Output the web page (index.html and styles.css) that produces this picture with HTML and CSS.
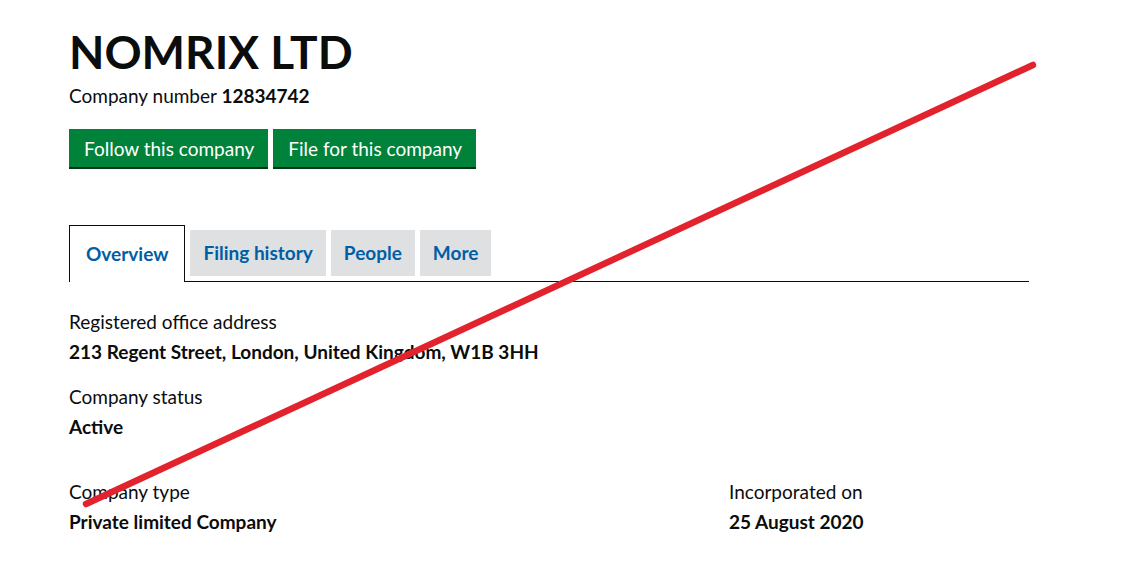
FILE: index.html
```html
<!DOCTYPE html>
<html lang="en">
<head>
<meta charset="utf-8">
<title>NOMRIX LTD</title>
<link rel="stylesheet" href="styles.css">
</head>
<body>
<main class="page">
  <h1 class="heading">NOMRIX LTD</h1>
  <p class="company-number">Company number <strong>12834742</strong></p>
  <div class="actions">
    <a class="button" href="#">Follow this company</a>
    <a class="button" href="#">File for this company</a>
  </div>
  <nav class="tabs">
    <a class="tab active" href="#">Overview</a>
    <a class="tab" href="#">Filing history</a>
    <a class="tab" href="#">People</a>
    <a class="tab" href="#">More</a>
  </nav>
  <dl class="details">
    <div class="item">
      <dt>Registered office address</dt>
      <dd>213 Regent Street, London, United Kingdom, W1B 3HH</dd>
    </div>
    <div class="item">
      <dt>Company status</dt>
      <dd>Active</dd>
    </div>
    <div class="row">
      <div class="item">
        <dt>Company type</dt>
        <dd>Private limited Company</dd>
      </div>
      <div class="item">
        <dt>Incorporated on</dt>
        <dd>25 August 2020</dd>
      </div>
    </div>
  </dl>
  <svg class="strike" width="1128" height="565" viewBox="0 0 1128 565" aria-hidden="true">
    <line x1="86" y1="504" x2="1033" y2="65" stroke="#e2232e" stroke-width="6.5" stroke-linecap="round"/>
  </svg>
</main>
</body>
</html>
```
FILE: styles.css
```css
* { box-sizing: border-box; }
html, body { margin: 0; padding: 0; background: #fff; }
body {
  font-family: "Lato", "Liberation Sans", sans-serif;
  color: #0b0c0c;
}
.page {
  position: relative;
  width: 1128px;
  height: 565px;
  padding: 28px 99px 0 69px;
  overflow: hidden;
}
.heading {
  margin: 0;
  font-size: 46px;
  line-height: 48px;
  font-weight: 700;
  letter-spacing: 0;
}
.company-number {
  margin: 9px 0 0;
  font-size: 19px;
  line-height: 22px;
}
.company-number strong { font-weight: 700; }
.actions {
  display: flex;
  gap: 5px;
  margin-top: 22px;
}
.button {
  display: block;
  background: #00823b;
  color: #fff;
  text-decoration: none;
  font-size: 19px;
  line-height: 36px;
  padding: 2px 14px 0 15px;
  box-shadow: 0 2px 0 #003618;
}
.tabs {
  display: flex;
  align-items: flex-end;
  gap: 5px;
  margin-top: 58px;
  border-bottom: 1px solid #0b0c0c;
  width: 960px;
}
.tab {
  display: block;
  background: #dee0e2;
  color: #005ea5;
  text-decoration: none;
  font-weight: 700;
  font-size: 19px;
  line-height: 46px;
  padding: 0 13px;
  margin-bottom: 5px;
}
.tab.active {
  background: #fff;
  border: 1px solid #0b0c0c;
  border-bottom: 0;
  line-height: 56px;
  padding: 0 16px;
  margin-bottom: -1px;
  height: 57px;
}
.details { margin: 29px 0 0; }
.item dt {
  font-size: 19px;
  line-height: 22px;
}
.item dd {
  margin: 8px 0 0;
  font-size: 19px;
  line-height: 22px;
  font-weight: 700;
}
.item + .item { margin-top: 23px; }
.row {
  display: grid;
  grid-template-columns: 660px 1fr;
  margin-top: 43px;
}
.row .item + .item { margin-top: 0; }
.strike {
  position: absolute;
  left: 0;
  top: 0;
  pointer-events: none;
}
```
